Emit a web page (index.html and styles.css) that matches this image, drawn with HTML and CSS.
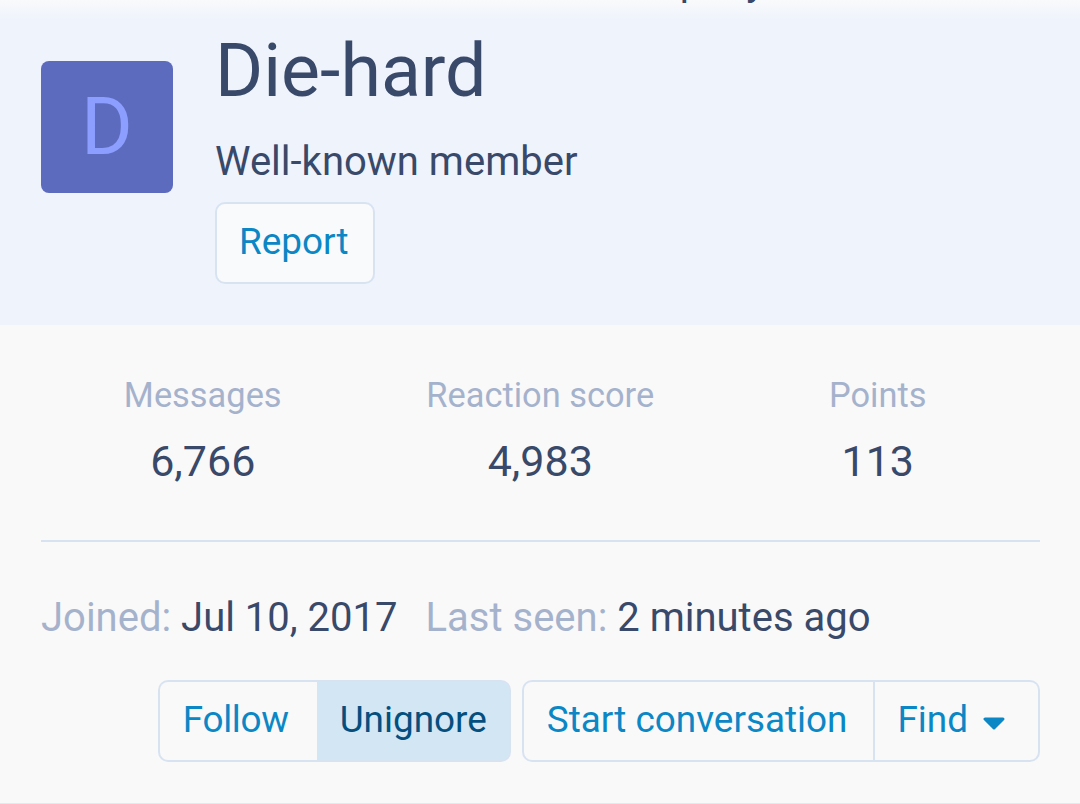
FILE: index.html
```html
<!DOCTYPE html>
<html lang="en">
<head>
    <meta charset="UTF-8">
    <meta name="viewport" content="width=device-width, initial-scale=1.0">
    <title>Die-hard</title>
    <link rel="stylesheet" href="styles.css">
</head>
<body>
    <div class="header">
        <div class="cut-line"><span>company</span></div>
        <div class="header-main">
            <div class="avatar">D</div>
            <div class="header-info">
                <h1>Die-hard</h1>
                <div class="user-title">Well-known member</div>
                <a class="btn report" href="#">Report</a>
            </div>
        </div>
    </div>
    <div class="content">
        <div class="stats">
            <div class="stat">
                <div class="label">Messages</div>
                <div class="value">6,766</div>
            </div>
            <div class="stat">
                <div class="label">Reaction score</div>
                <div class="value">4,983</div>
            </div>
            <div class="stat">
                <div class="label">Points</div>
                <div class="value">113</div>
            </div>
        </div>
        <div class="dates">
            <span class="date"><span class="label">Joined:</span> Jul 10, 2017</span>
            <span class="date"><span class="label">Last seen:</span> 2 minutes ago</span>
        </div>
        <div class="actions">
            <div class="btn-group">
                <a class="btn follow" href="#">Follow</a>
                <a class="btn active" href="#">Unignore</a>
            </div>
            <div class="btn-group">
                <a class="btn start" href="#">Start conversation</a>
                <a class="btn find" href="#">Find<svg class="caret" width="22" height="13" viewBox="0 0 22 13"><path d="M2 2H20L11 11Z" fill="#0c87c5" stroke="#0c87c5" stroke-width="3" stroke-linejoin="round"/></svg></a>
            </div>
        </div>
    </div>
</body>
</html>
```

FILE: styles.css
```css
* {
    box-sizing: border-box;
}
body {
    margin: 0;
    height: 804px;
    overflow: hidden;
    font-family: Roboto, sans-serif;
    font-size: 40px;
    color: #39496a;
    background-color: #f9f9fa;
    border-bottom: 1px solid #e4e8f1;
}
a {
    text-decoration: none;
}
.header {
    height: 325px;
    background: linear-gradient(#f9fafb 0, #eff3fb 20px);
}
.cut-line {
    height: 5px;
    padding-left: 601px;
    overflow: hidden;
    display: flex;
    align-items: flex-end;
}
.cut-line span {
    line-height: 20px;
    margin-bottom: 13px;
    flex: none;
}
.header-main {
    display: flex;
    padding: 0 41px;
}
.avatar {
    width: 132px;
    height: 132px;
    margin-top: 56px;
    margin-right: 42px;
    border-radius: 8px;
    background-color: #5c6bbd;
    color: #8c9eff;
    font-size: 79px;
    line-height: 132px;
    text-align: center;
    flex: none;
}
.header-info {
    padding-top: 22px;
}
h1 {
    margin: 0;
    font-size: 73.5px;
    font-weight: 400;
    line-height: 88px;
}
.user-title {
    margin-top: 25px;
    line-height: 44px;
}
.btn {
    display: inline-block;
    height: 82px;
    padding: 0 23px;
    border: 2px solid #d8e3f2;
    color: #0c87c5;
    font-size: 36.9px;
    line-height: 76px;
    white-space: nowrap;
}
.report {
    margin-top: 18px;
    padding: 0 24px 0 22px;
    border-radius: 10px;
    background-color: #f9fafb;
}
.content {
    padding: 0 40px 0 41px;
}
.stats {
    display: grid;
    grid-template-columns: repeat(3, 337.5px);
    margin: 0 -7px;
    padding-top: 50px;
    padding-bottom: 55px;
    text-align: center;
}
.stat .label {
    font-size: 34.4px;
    line-height: 40px;
}
.value {
    margin-top: 22px;
    font-size: 43px;
    line-height: 48px;
}
.label {
    color: #a5b2cc;
}
.dates {
    display: flex;
    gap: 28px;
    padding-top: 53px;
    border-top: 2px solid #d8e3f2;
    line-height: 46px;
}
.actions {
    display: flex;
    justify-content: flex-end;
    gap: 11px;
    margin-top: 39px;
}
.btn-group {
    display: flex;
}
.btn-group .btn:first-child {
    border-radius: 10px 0 0 10px;
}
.btn-group .btn:last-child {
    border-left: 0;
    border-radius: 0 10px 10px 0;
}
.follow {
    border-right: 0;
    padding-right: 28px;
    letter-spacing: -0.3px;
}
.active {
    padding-right: 22px;
    background-color: #d3e6f3;
    color: #054f7f;
}
.start {
    padding-right: 26px;
}
.find {
    padding: 0 33px 0 22px;
}
.caret {
    margin-left: 15px;
    vertical-align: 2px;
}
```
